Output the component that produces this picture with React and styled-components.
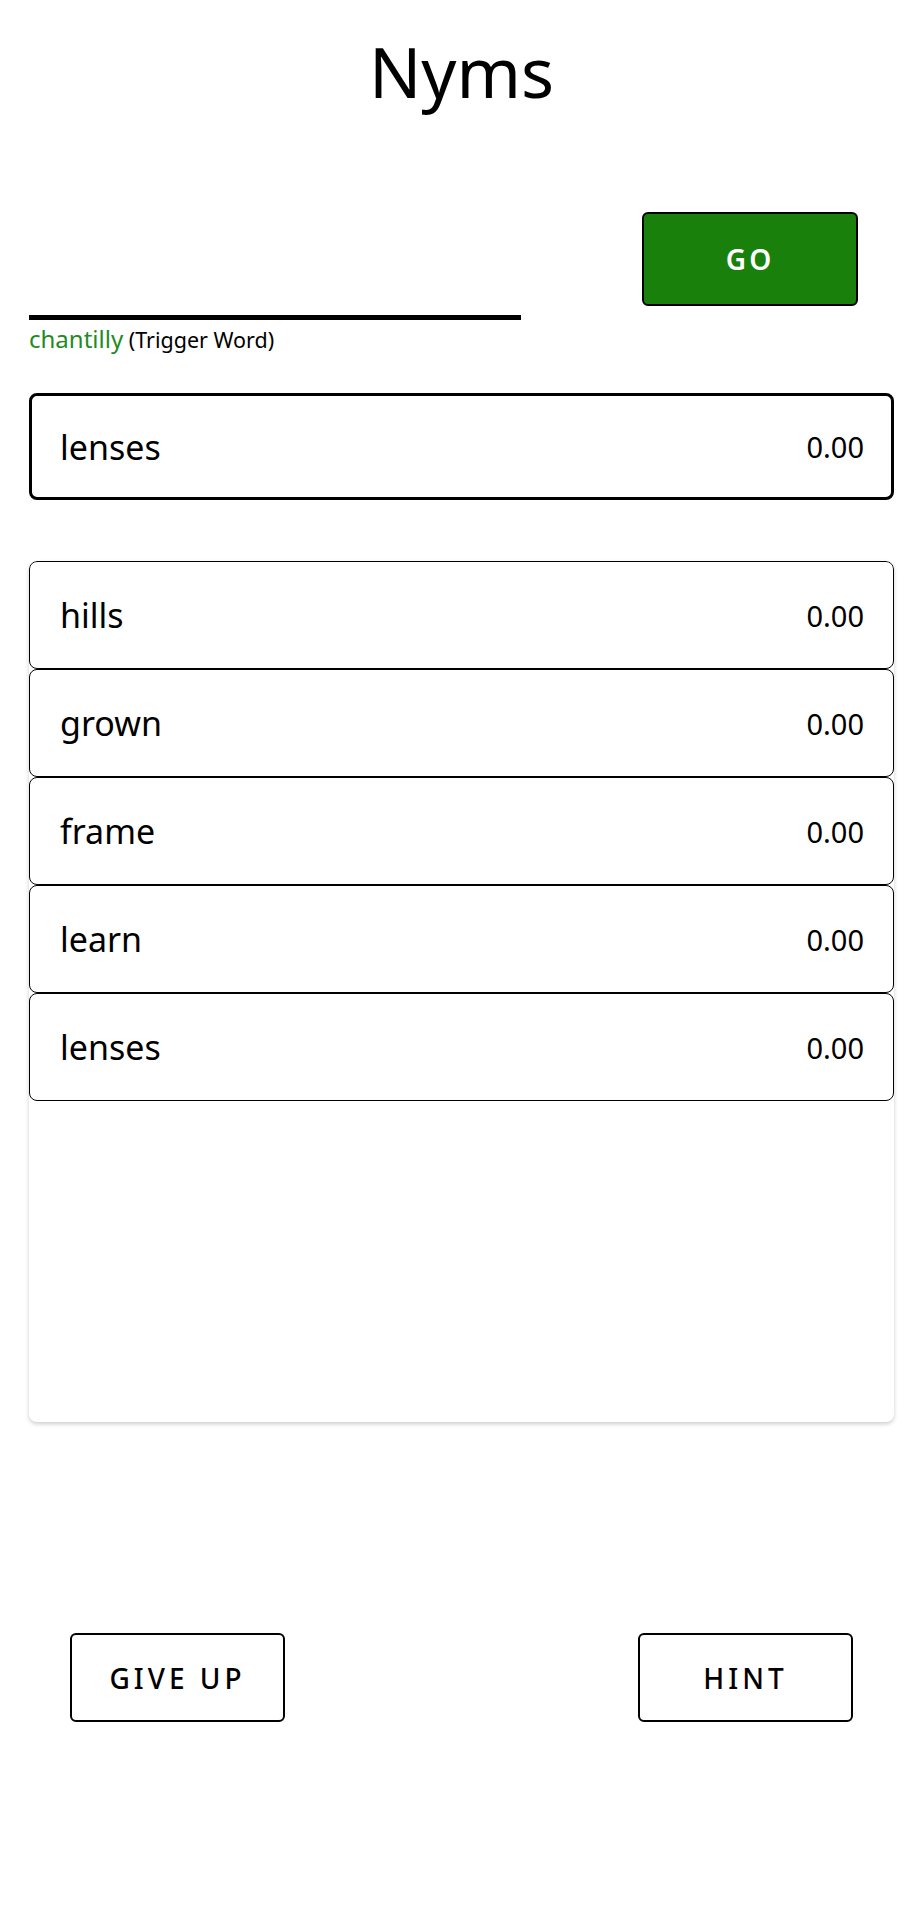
import styled, { createGlobalStyle } from "styled-components";

const GlobalStyle = createGlobalStyle`
  body {
    margin: 0;
    background: #fff;
    font-family: "Noto Sans", "Open Sans", sans-serif;
    color: #000;
  }
`;

const Page = styled.div`
  padding: 0 29px 0 29px;
`;

const Title = styled.h1`
  margin: 24px 0 0;
  text-align: center;
  font-size: 69px;
  font-weight: 400;
  line-height: normal;
`;

const InputRow = styled.div`
  display: flex;
  justify-content: space-between;
  align-items: flex-start;
  margin-top: 94px;
`;

const WordInput = styled.input`
  box-sizing: border-box;
  width: 492px;
  height: 108px;
  border: none;
  border-bottom: 5px solid #000;
  outline: none;
  font-family: inherit;
  font-size: 34px;
  background: transparent;
`;

const GoButton = styled.button`
  box-sizing: border-box;
  width: 216px;
  height: 94px;
  margin-right: 36px;
  background: #19800b;
  border: 2px solid #000;
  border-radius: 6px;
  color: #fff;
  font-family: inherit;
  font-size: 28px;
  font-weight: 600;
  letter-spacing: 3px;
`;

const TriggerLine = styled.div`
  margin-top: 2px;
  font-size: 21.5px;
`;

const TriggerWord = styled.span`
  color: #228b22;
  font-size: 24px;
`;

const WordCard = styled.div`
  box-sizing: border-box;
  display: flex;
  justify-content: space-between;
  align-items: center;
  height: ${(p) => (p.current ? "107px" : "108px")};
  padding: 0 ${(p) => (p.current ? "27px" : "29px")} 0 ${(p) => (p.current ? "28px" : "30px")};
  border: ${(p) => (p.current ? "3px" : "1px")} solid #000;
  border-radius: 8px;
  background: #fff;
`;

const CurrentWrap = styled.div`
  margin-top: 38px;
`;

const Word = styled.span`
  font-size: 34px;
`;

const Score = styled.span`
  font-size: 29px;
`;

const GuessList = styled.div`
  margin-top: 61px;
  height: 861px;
  border-radius: 8px;
  box-shadow: 0 2px 4px rgba(0, 0, 0, 0.2);
  overflow: hidden;
`;

const ActionRow = styled.div`
  display: flex;
  justify-content: space-between;
  margin-top: 211px;
  padding: 0 41px 0 41px;
`;

const ActionButton = styled.button`
  box-sizing: border-box;
  width: 215px;
  height: 89px;
  background: #fff;
  border: 2px solid #000;
  border-radius: 6px;
  color: #000;
  font-family: inherit;
  font-size: 28px;
  font-weight: 500;
  letter-spacing: 4px;
`;

const guesses = ["hills", "grown", "frame", "learn", "lenses"];

export default function App() {
  return (
    <>
      <GlobalStyle />
      <Page>
        <Title>Nyms</Title>
        <InputRow>
          <WordInput type="text" />
          <GoButton>GO</GoButton>
        </InputRow>
        <TriggerLine>
          <TriggerWord>chantilly</TriggerWord> (Trigger Word)
        </TriggerLine>
        <CurrentWrap>
          <WordCard current>
            <Word>lenses</Word>
            <Score>0.00</Score>
          </WordCard>
        </CurrentWrap>
        <GuessList>
          {guesses.map((g, i) => (
            <WordCard key={i}>
              <Word>{g}</Word>
              <Score>0.00</Score>
            </WordCard>
          ))}
        </GuessList>
        <ActionRow>
          <ActionButton>GIVE UP</ActionButton>
          <ActionButton>HINT</ActionButton>
        </ActionRow>
      </Page>
    </>
  );
}
